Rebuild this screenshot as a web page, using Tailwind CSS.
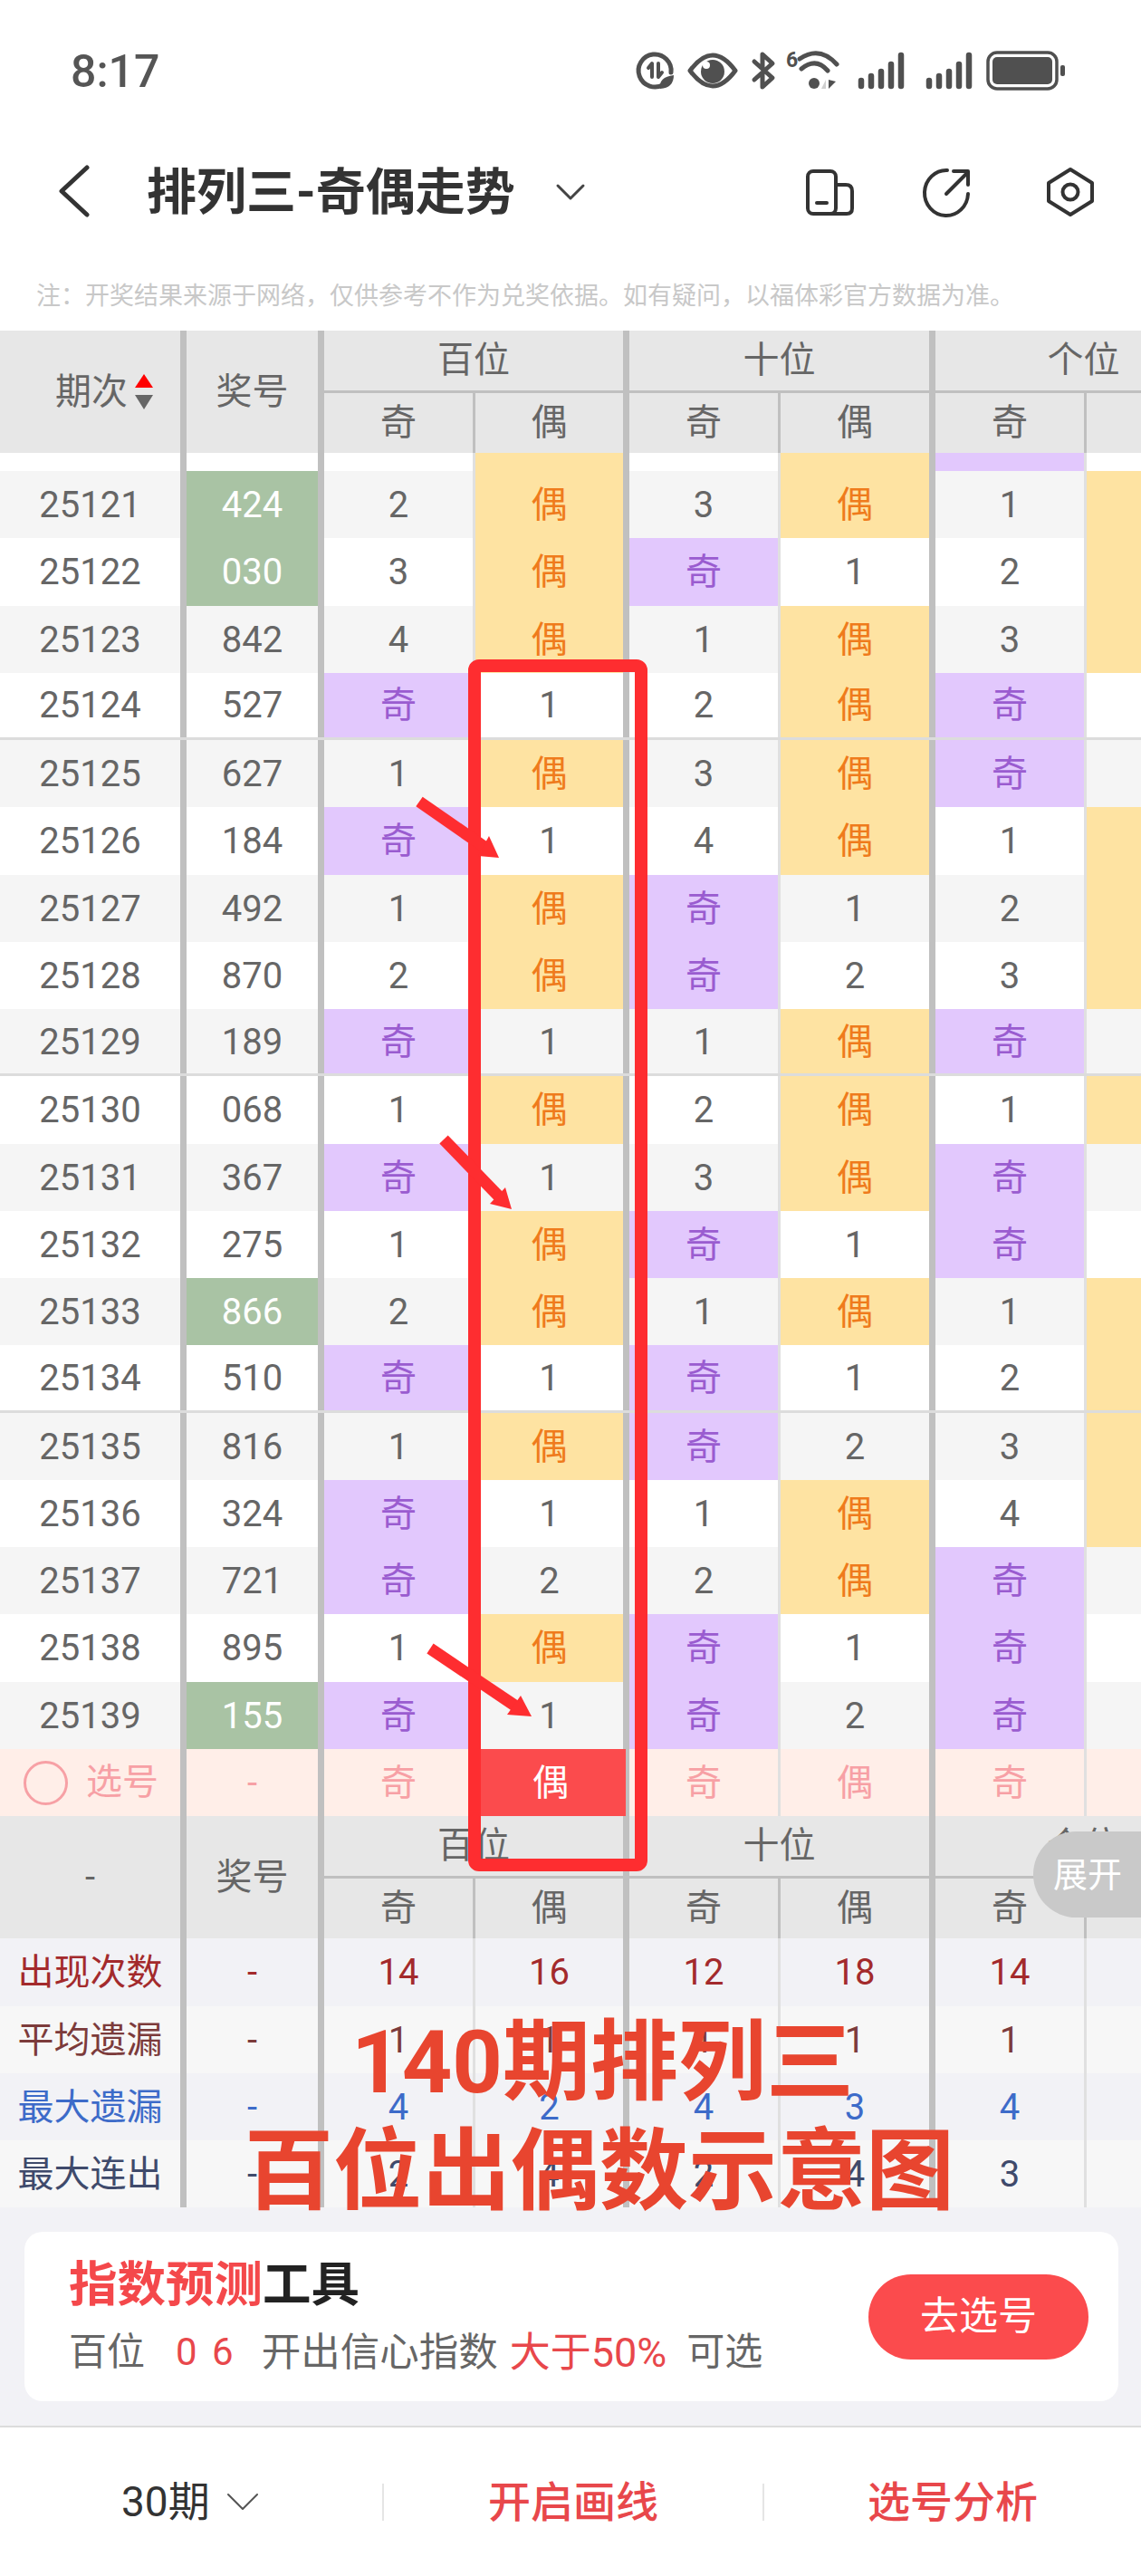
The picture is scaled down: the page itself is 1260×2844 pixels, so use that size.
<!DOCTYPE html>
<html lang="zh-CN">
<head>
  <meta charset="UTF-8" />
  <meta name="viewport" content="width=device-width, initial-scale=1" />
  <title>排列三-奇偶走势</title>
  <script src="https://cdn.jsdelivr.net/npm/@tailwindcss/browser@4"></script>
</head>
<body class="bg-white font-['Roboto','Noto_Sans_CJK_SC',sans-serif]">
  <div class="relative w-[1260px] h-[2844px] overflow-hidden bg-white">

    <!-- Status bar -->
    <div class="h-[158px] flex items-center pl-[78px] pr-[80px]">
      <span class="text-[50px] leading-none font-medium text-[#555]">8:17</span>
      <svg class="ml-auto w-[480px] h-[50px]" viewBox="700 54 480 50" fill="none" stroke="#505050" stroke-linecap="round" stroke-linejoin="round">
        <path d="M733 93 A18 18 0 1 1 741 80" stroke-width="5"/>
        <path d="M716 75 L720 70 V85 M727 70 V85 M727 85 L731 80" stroke-width="4"/>
        <path d="M729 98 Q727 85 744 83 Q744 97 729 98Z" fill="#505050" stroke="none"/>
        <path d="M762 78 Q787 44 812 78 Q787 112 762 78Z" stroke-width="5"/>
        <circle cx="787" cy="79" r="13" fill="#505050" stroke="none"/>
        <circle cx="780" cy="72" r="4" fill="#fff" stroke="none"/>
        <path d="M842 74 V60 L853 70 L833 88 M842 82 V96 L853 86 L833 68" stroke-width="5"/>
        <text x="868" y="74" font-size="23" font-weight="700" fill="#505050" stroke="none">6</text>
        <path d="M883 65 Q905 50 924 71 M885 76 Q901 63 914 78" stroke-width="5"/>
        <circle cx="899" cy="92" r="6" fill="#505050" stroke="none"/>
        <path d="M907 98 L912 88 V98Z" fill="#cfcfcf" stroke="none"/>
        <path d="M915 88 V98 L923 90Z" fill="#505050" stroke="none"/>
        <g stroke-width="6.5">
          <path d="M951 89 V95 M962 84 V95 M973 79 V95 M984 71 V95 M995 61 V95"/>
          <path d="M1026 89 V95 M1037 84 V95 M1048 79 V95 M1059 71 V95 M1070 61 V95"/>
        </g>
        <rect x="1091" y="58" width="76" height="40" rx="10" stroke-width="3.5"/>
        <rect x="1096" y="63" width="66" height="30" rx="5" fill="#505050" stroke="none"/>
        <rect x="1171" y="72" width="5" height="12" rx="2" fill="#505050" stroke="none"/>
      </svg>
    </div>

    <!-- Nav -->
    <div class="h-[108px] flex items-center pl-[64px]">
      <svg class="w-[36px] h-[60px]" viewBox="64 182 36 60" fill="none" stroke="#333" stroke-width="5" stroke-linecap="round" stroke-linejoin="round">
        <path d="M96 185 L68 211 L96 237"/>
      </svg>
      <span class="ml-[62px] text-[55px] leading-none font-bold text-[#333]">排列三-奇偶走势</span>
      <svg class="ml-[44px] w-[34px] h-[20px]" viewBox="611 201 34 20" fill="none" stroke="#444" stroke-width="3" stroke-linecap="round" stroke-linejoin="round">
        <path d="M614 204 L628 218 L642 204"/>
      </svg>
      <svg class="ml-auto mr-[50px] w-[326px] h-[60px]" viewBox="884 182 326 60" fill="none" stroke="#333" stroke-width="4" stroke-linecap="round" stroke-linejoin="round">
        <rect x="892" y="189" width="31" height="47" rx="6"/>
        <path d="M902 224 H913"/>
        <path d="M923 204 H934 Q941 204 941 211 V230 Q941 236 935 236 H915"/>
        <path d="M1046 188 A24 25 0 1 0 1069 214"/>
        <path d="M1045 214 L1069 190 M1053 189 H1069 V204"/>
        <path d="M1182 187 L1206 202 V222 L1182 237 L1158 222 V202Z"/>
        <circle cx="1182" cy="212" r="8.5"/>
      </svg>
    </div>

    <!-- Note -->
    <div class="h-[99px] pt-[24px] pl-[40px] flex items-center">
      <span class="text-[27px] leading-none text-[#c8c8c8]">注：开奖结果来源于网络，仅供参考不作为兑奖依据。如有疑问，以福体彩官方数据为准。</span>
    </div>

    <!-- Top header -->
    <div id="topHeader"></div>

    <!-- Scrolling rows -->
    <div class="h-[1431px] overflow-hidden">
      <div id="rows" class="-mt-[54.25px]"></div>
    </div>

    <!-- Pick row -->
    <div id="pickRow"></div>

    <!-- Bottom header -->
    <div id="bottomHeader"></div>

    <!-- Stats -->
    <div id="stats"></div>

    <!-- Index tool card -->
    <div class="bg-[#f2f2f6] h-[241px] pl-[27px] pr-[25px] pt-[27px]">
      <div class="h-[187px] bg-white rounded-[20px] pl-[49px] pr-[33px] flex items-center justify-between">
        <div class="h-full pt-[32px]">
          <div class="h-[54px] text-[53.5px] leading-none font-bold text-[#f4484b]">指数预测<span class="text-[#222]">工具</span></div>
          <div class="mt-[26px] h-[42px] flex items-center text-[42px] leading-none text-[#666]">
            <span>百位</span>
            <span class="ml-[34px] text-[#e8474b] tracking-[3px]">0 6</span>
            <span class="ml-[28px] text-[43.5px]">开出信心指数</span>
            <span class="ml-[13px] text-[45px] text-[#e8474b]">大于50%</span>
            <span class="ml-[22px]">可选</span>
          </div>
        </div>
        <div class="w-[243px] h-[94px] rounded-full bg-[#fb4b4d] text-white text-[43px] leading-none flex items-center justify-center">去选号</div>
      </div>
    </div>

    <!-- Bottom bar -->
    <div class="h-[166px] border-t-2 border-[#dcdcdc] flex items-center">
      <div class="w-[422px] flex items-center pl-[134px] text-[46px] leading-none text-[#333]">
        <span>30期</span>
        <svg class="ml-[18px] w-[36px] h-[20px]" viewBox="0 0 36 20" fill="none" stroke="#555" stroke-width="2" stroke-linecap="round" stroke-linejoin="round">
          <path d="M2 2 L18 18 L34 2"/>
        </svg>
      </div>
      <div class="w-[2px] h-[41px] bg-[#e5e5e5]"></div>
      <div class="w-[418px] text-center text-[47px] leading-none font-medium text-[#e8474b]">开启画线</div>
      <div class="w-[2px] h-[41px] bg-[#e5e5e5]"></div>
      <div class="w-[416px] text-center text-[47px] leading-none font-medium text-[#e8474b]">选号分析</div>
    </div>

    <!-- 展开 tab -->
    <div class="absolute left-[1141px] top-[2022px] w-[119px] h-[95px] rounded-l-[47.5px] bg-[#c9c9c9] text-white text-[38px] leading-none flex items-center pl-[22px]">展开</div>

    <!-- Hand-drawn annotation -->
    <svg class="absolute left-0 top-0 w-[1260px] h-[2844px] pointer-events-none" viewBox="0 0 1260 2844" fill="none">
      <rect x="524" y="735" width="184" height="1324" rx="5" stroke="#fe2d30" stroke-width="14"/>
      <g stroke="#fe2d30" stroke-width="13">
        <path d="M463 885 L535 935"/>
        <path d="M490 1258 L552 1322"/>
        <path d="M475 1820 L570 1884"/>
      </g>
      <g fill="#fe2d30">
        <path d="M551 947 L540 923 L528 945Z"/>
        <path d="M565 1335 L558 1311 L541 1329Z"/>
        <path d="M587 1895 L575 1872 L560 1893Z"/>
      </g>
    </svg>
    <div class="absolute left-[388px] top-[2229px] text-[97px] leading-none font-bold text-[#e8452f] whitespace-nowrap">140期排列三</div>
    <div class="absolute left-[270px] top-[2349px] text-[98px] leading-none font-bold text-[#e8452f] whitespace-nowrap">百位出偶数示意图</div>
  </div>

  <script>
    // id, draw number, drawn-in-green, then 百位奇 百位偶 十位奇 十位偶 个位奇
    const data = [
      ['', '', 0, '', '偶', '', '偶', '奇'],
      ['25121', '424', 1, '2', '偶', '3', '偶', '1'],
      ['25122', '030', 1, '3', '偶', '奇', '1', '2'],
      ['25123', '842', 0, '4', '偶', '1', '偶', '3'],
      ['25124', '527', 0, '奇', '1', '2', '偶', '奇'],
      ['25125', '627', 0, '1', '偶', '3', '偶', '奇'],
      ['25126', '184', 0, '奇', '1', '4', '偶', '1'],
      ['25127', '492', 0, '1', '偶', '奇', '1', '2'],
      ['25128', '870', 0, '2', '偶', '奇', '2', '3'],
      ['25129', '189', 0, '奇', '1', '1', '偶', '奇'],
      ['25130', '068', 0, '1', '偶', '2', '偶', '1'],
      ['25131', '367', 0, '奇', '1', '3', '偶', '奇'],
      ['25132', '275', 0, '1', '偶', '奇', '1', '奇'],
      ['25133', '866', 1, '2', '偶', '1', '偶', '1'],
      ['25134', '510', 0, '奇', '1', '奇', '1', '2'],
      ['25135', '816', 0, '1', '偶', '奇', '2', '3'],
      ['25136', '324', 0, '奇', '1', '1', '偶', '4'],
      ['25137', '721', 0, '奇', '2', '2', '偶', '奇'],
      ['25138', '895', 0, '1', '偶', '奇', '1', '奇'],
      ['25139', '155', 1, '奇', '1', '奇', '2', '奇']
    ];

    const GRID = 'grid grid-cols-[206px_152px_167px_170px_167px_171px_167px_60px] h-[74.25px]';
    const THICK = 'border-r-[7px] border-[#c0c0c0]';
    const THIN = 'border-r-[3px] border-[#e0e0e0]';
    const CELL = 'flex items-center justify-center leading-none pt-[2px]';

    function trendCell(v, sep, extra = '') {
      let tone = 'text-[40px] text-[#666]';
      if (v === '奇') tone = 'text-[40px] bg-[#e2c8fd] text-[#9a5cd0]';
      if (v === '偶') tone = 'text-[40px] bg-[#fee3a2] text-[#ef7b1c]';
      return `<div class="${CELL} ${sep} ${tone} ${extra}">${v}</div>`;
    }

    document.getElementById('rows').innerHTML = data.map((r, i) => {
      const zebra = i % 2 === 1 ? 'bg-[#f5f5f5]' : 'bg-white';
      const line = (i === 4 || i === 9 || i === 14) ? 'border-b-[3px] border-b-[#dcdcdc]' : '';
      const ball = r[2] ? 'bg-[#a9c3a4] text-white' : 'text-[#666]';
      const lastEven = r[7] !== '奇' ? 'bg-[#fee3a2]' : '';
      // the row scrolled under the header only shows the last pixels of its text
      const lift = i === 0 ? 'pb-[8px]' : '';
      return `<div class="${GRID} ${zebra} ${line}">
        <div class="${CELL} ${THICK} text-[40px] text-[#666]">${r[0]}</div>
        <div class="${CELL} ${THICK} text-[40px] ${ball}">${r[1]}</div>
        ${trendCell(r[3], THIN)}${trendCell(r[4], THICK, lift)}${trendCell(r[5], THIN)}${trendCell(r[6], THICK, lift)}${trendCell(r[7], THIN, lift)}
        <div class="${lastEven}"></div>
      </div>`;
    }).join('');

    function header(first) {
      const group = (title, width) => `<div class="${width} shrink-0 ${THICK}">
        <div class="h-[66px] border-b-[3px] border-[#c0c0c0] box-content flex items-center justify-center text-[40px] leading-none text-[#666]">${title}</div>
        <div class="h-[66px] grid grid-cols-[167px_1fr] text-[40px] leading-none text-[#666]">
          <div class="flex items-center justify-center border-r-[3px] border-[#c0c0c0]">奇</div>
          <div class="flex items-center justify-center">偶</div>
        </div>
      </div>`;
      return `<div class="h-[135px] flex bg-[#e7e7e7] overflow-hidden">
        <div class="w-[206px] shrink-0 ${THICK} flex items-center text-[40px] leading-none text-[#666]">${first}</div>
        <div class="w-[152px] shrink-0 ${THICK} flex items-center justify-center text-[40px] leading-none text-[#666]">奖号</div>
        ${group('百位', 'w-[337px]')}${group('十位', 'w-[338px]')}${group('个位', 'w-[334px]')}
      </div>`;
    }
    document.getElementById('topHeader').innerHTML = header(`<span class="ml-[61px]">期次</span>
      <svg class="ml-[8px] w-[20px] h-[40px]" viewBox="0 0 20 40"><path d="M10 0 L20 15 H0Z" fill="#f00"/><path d="M0 23 H20 L10 39Z" fill="#666"/></svg>`);
    document.getElementById('bottomHeader').innerHTML = header('<span class="w-full text-center">-</span>');

    // Pick row
    const pink = 'text-[40px] text-[#f7a0a5]';
    document.getElementById('pickRow').innerHTML = `<div class="${GRID} bg-[#ffeee8]">
      <div class="flex items-center ${THICK} pl-[26px] ${pink} leading-none">
        <span class="w-[49px] h-[49px] rounded-full border-[3px] border-[#f7a0a5]"></span><span class="ml-[20px]">选号</span>
      </div>
      <div class="${CELL} ${THICK} ${pink}">-</div>
      <div class="${CELL} ${THIN} ${pink}">奇</div>
      <div class="${CELL} border-r-[4px] border-[#c0c0c0] bg-[#fb4b4d] text-[40px] text-white">偶</div>
      <div class="${CELL} ${THIN} ${pink}">奇</div>
      <div class="${CELL} ${THICK} ${pink}">偶</div>
      <div class="${CELL} ${THIN} ${pink}">奇</div>
      <div></div>
    </div>`;

    // Stats
    const stats = [
      ['出现次数', 'text-[#a32a2c]', 'bg-[#f2f2f6]', ['14', '16', '12', '18', '14']],
      ['平均遗漏', 'text-[#7c3b3b]', 'bg-[#f7f7f7]', ['1', '1', '1', '1', '1']],
      ['最大遗漏', 'text-[#3d6bc9]', 'bg-[#f2f2f6]', ['4', '2', '4', '3', '4']],
      ['最大连出', 'text-[#3f4a6b]', 'bg-[#f7f7f7]', ['2', '4', '2', '4', '3']]
    ];
    document.getElementById('stats').innerHTML = stats.map(([label, color, bg, v]) => `<div class="${GRID} ${bg} ${color}">
      <div class="${CELL} ${THICK} text-[40px]">${label}</div>
      <div class="${CELL} ${THICK} text-[40px]">-</div>
      <div class="${CELL} ${THIN} text-[40px]">${v[0]}</div>
      <div class="${CELL} ${THICK} text-[40px]">${v[1]}</div>
      <div class="${CELL} ${THIN} text-[40px]">${v[2]}</div>
      <div class="${CELL} ${THICK} text-[40px]">${v[3]}</div>
      <div class="${CELL} ${THIN} text-[40px]">${v[4]}</div>
      <div></div>
    </div>`).join('');
  </script>
</body>
</html>
